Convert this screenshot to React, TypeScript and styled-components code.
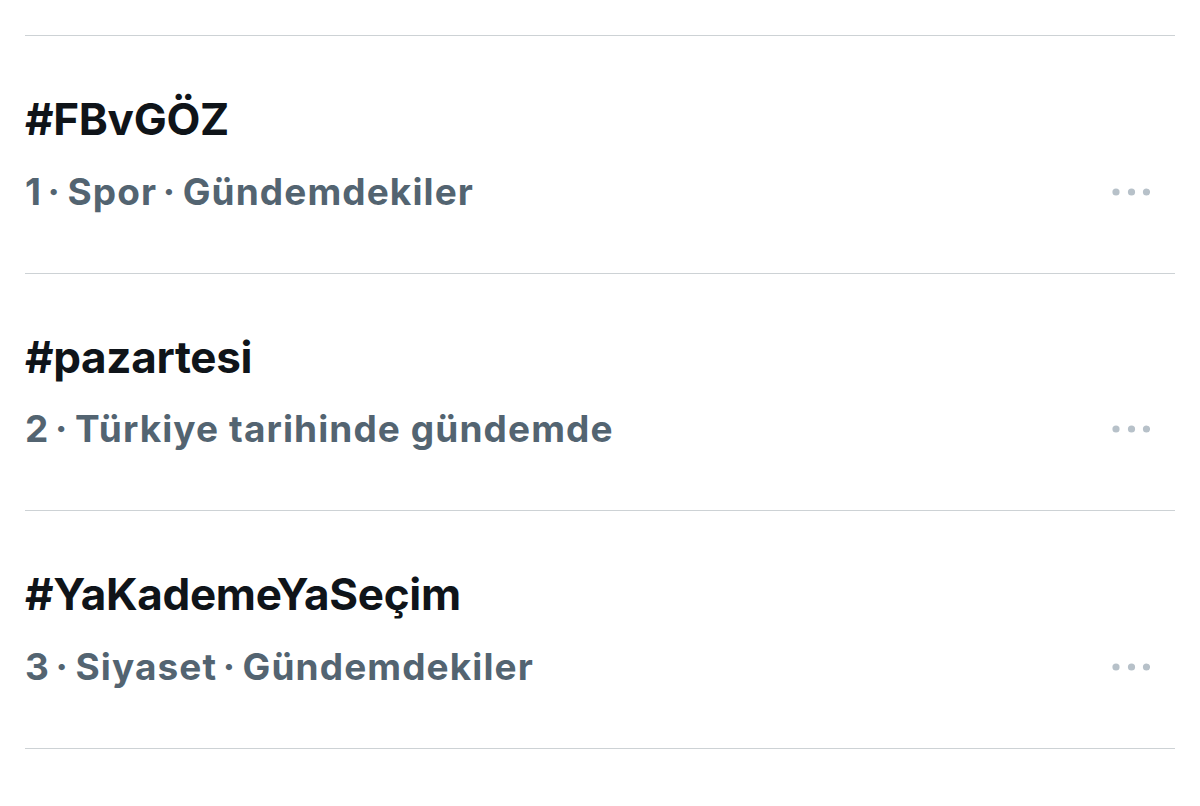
import React from 'react'
import styled, { createGlobalStyle } from 'styled-components'

const GlobalStyle = createGlobalStyle`
  html, body {
    margin: 0;
    padding: 0;
    background: #ffffff;
  }
  body {
    font-family: Inter, "Liberation Sans", Arial, sans-serif;
    -webkit-font-smoothing: antialiased;
  }
`

type Trend = {
  rank: number
  tag: string
  context: string[]
}

const trends: Trend[] = [
  { rank: 1, tag: '#FBvGÖZ', context: ['Spor', 'Gündemdekiler'] },
  { rank: 2, tag: '#pazartesi', context: ['Türkiye tarihinde gündemde'] },
  { rank: 3, tag: '#YaKademeYaSeçim', context: ['Siyaset', 'Gündemdekiler'] },
]

export default function App() {
  return (
    <>
      <GlobalStyle />
      <Page>
        <TrendList>
          {trends.map((t) => (
            <TrendRow key={t.rank}>
              <Title>{t.tag}</Title>
              <MetaRow>
                <Meta>
                  {t.rank}
                  {t.context.map((c) => (
                    <React.Fragment key={c}>
                      <Dot>·</Dot>
                      {c}
                    </React.Fragment>
                  ))}
                </Meta>
                <MoreButton aria-label="Daha fazla">
                  <svg width="38" height="8" viewBox="0 0 38 8">
                    <circle cx="4" cy="4" r="3.6" fill="#b7c1c9" />
                    <circle cx="19.5" cy="4" r="3.6" fill="#b7c1c9" />
                    <circle cx="34.5" cy="4" r="3.6" fill="#b7c1c9" />
                  </svg>
                </MoreButton>
              </MetaRow>
            </TrendRow>
          ))}
        </TrendList>
      </Page>
    </>
  )
}

const Page = styled.div`
  width: 1200px;
  height: 806px;
  padding: 35px 25px 0;
  box-sizing: border-box;
  overflow: hidden;
`

const TrendList = styled.div`
  display: flex;
  flex-direction: column;
  border-bottom: 1.5px solid #cdd2d5;
`

const TrendRow = styled.div`
  display: flex;
  flex-direction: column;
  box-sizing: border-box;
  height: 237.5px;
  padding: 57px 0 0;
  border-top: 1.5px solid #cdd2d5;
`

const Title = styled.div`
  font-size: 44px;
  line-height: 52px;
  font-weight: 700;
  color: #0f1419;
  letter-spacing: -0.3px;
`

const MetaRow = styled.div`
  display: flex;
  align-items: center;
  justify-content: space-between;
  margin-top: 24.6px;
  padding-right: 25px;
`

const Meta = styled.div`
  font-size: 37px;
  line-height: 44px;
  font-weight: 650;
  color: #536471;
  letter-spacing: 1.1px;
`

const Dot = styled.span`
  margin: 0 6.5px 0 5.5px;
`

const MoreButton = styled.div`
  display: flex;
  align-items: center;
  height: 44px;
`
